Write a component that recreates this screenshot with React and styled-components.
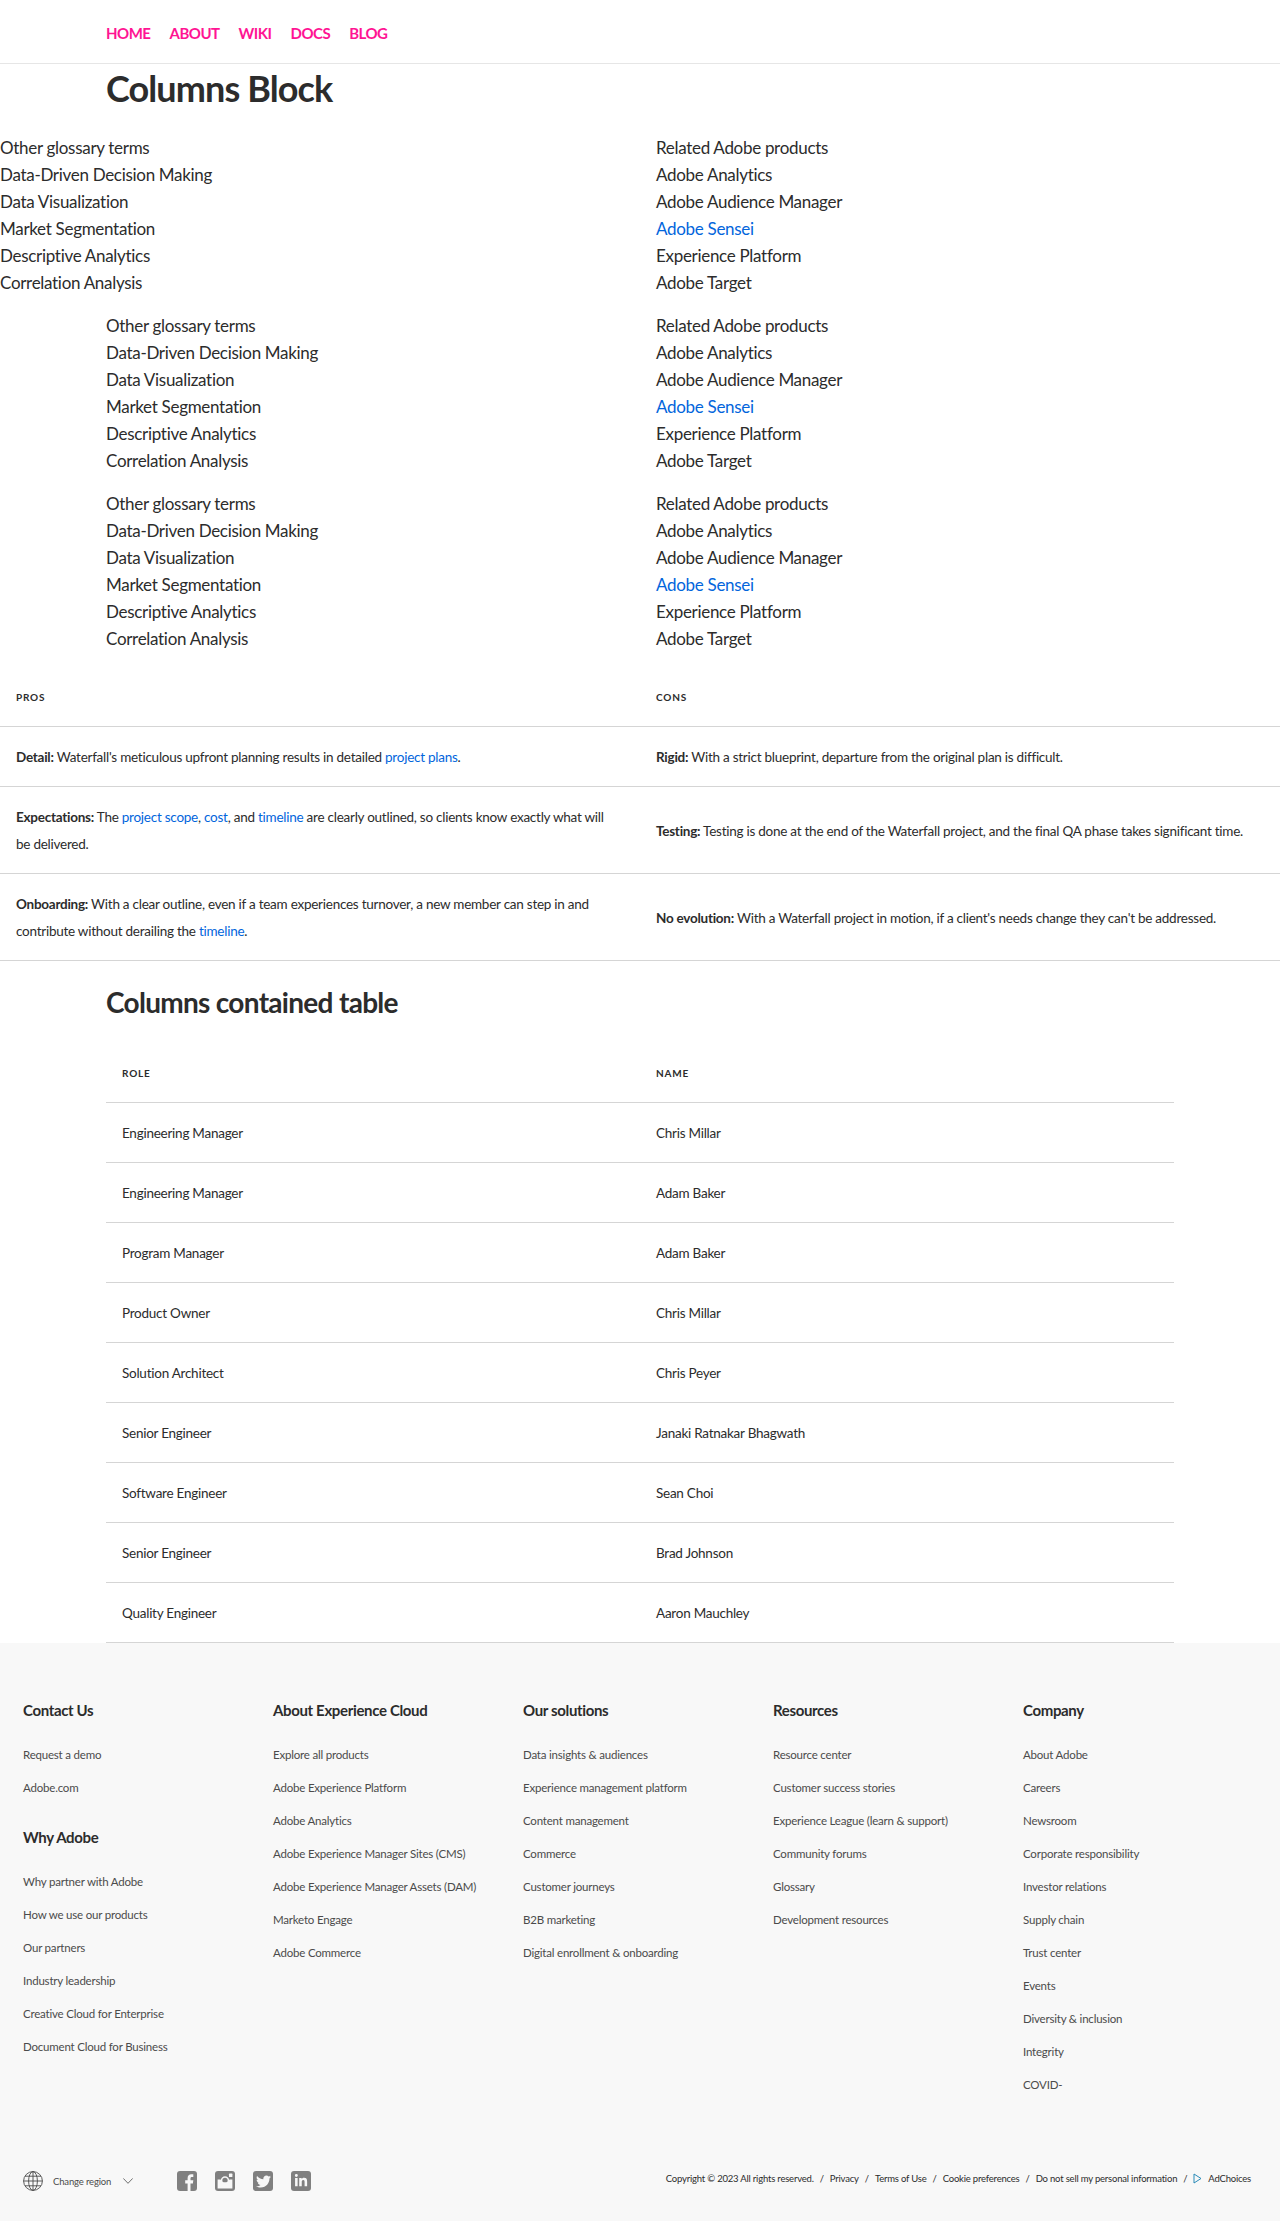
import React from 'react';
import styled, { createGlobalStyle } from 'styled-components';
import { FaTwitter, FaLinkedinIn } from 'react-icons/fa';

const GlobalStyle = createGlobalStyle`
  * { box-sizing: border-box; }
  body {
    margin: 0;
    background: #fff;
    color: #2c2c2c;
    font-family: "Lato", "Noto Sans", sans-serif;
  }
  a { color: inherit; text-decoration: none; }
`;

const Header = styled.header`
  height: 64px;
  border-bottom: 1px solid #e6e6e6;
  padding-left: 106px;
  display: flex;
  align-items: center;
`;

const Nav = styled.nav`
  display: flex;
  gap: 19px;
  margin-top: 2px;
  a {
    color: #ff1493;
    font-size: 15px;
    font-weight: 700;
    line-height: 20px;
    letter-spacing: -0.5px;
  }
`;

const Heading = styled.h1`
  margin: 0 0 0 106px;
  padding-top: 2px;
  font-size: 36px;
  line-height: 45px;
  font-weight: 700;
  height: 70px;
  letter-spacing: -0.9px;
`;

const Columns = styled.div`
  display: grid;
  grid-template-columns: ${(p) => (p.$bleed ? '656px' : '550px')} 1fr;
  padding-left: ${(p) => (p.$bleed ? '0' : '106px')};
  margin-bottom: 16px;
  font-size: 17px;
  line-height: 27px;
  letter-spacing: -0.3px;
  p { margin: 0; }
  a { color: #0265dc; }
`;

const Table = styled.table`
  border-collapse: collapse;
  table-layout: fixed;
  width: ${(p) => (p.$contained ? '1068px' : '100%')};
  margin-left: ${(p) => (p.$contained ? '106px' : '0')};
  margin-top: ${(p) => (p.$contained ? '0' : '-1px')};
  font-size: 13.5px;
  line-height: 27px;
  letter-spacing: -0.25px;
  th, td {
    padding: 17px 24px 15px 16px;
    text-align: left;
    border-bottom: 1px solid #d5d5d5;
  }
  th {
    font-size: 10px;
    font-weight: 700;
    letter-spacing: 0.8px;
    text-transform: uppercase;
  }
  a { color: #0265dc; }
  strong { font-weight: 700; }
`;

const SubHeading = styled.h2`
  margin: 24px 0 23px 106px;
  font-size: 28px;
  line-height: 35px;
  font-weight: 700;
  letter-spacing: -0.7px;
`;

const Footer = styled.footer`
  background: #f8f8f8;
  height: 578px;
  padding: 55px 29px 0 23px;
`;

const FooterGrid = styled.div`
  display: grid;
  grid-template-columns: repeat(5, 250px);
  height: 421px;
`;

const FooterGroup = styled.div`
  margin-bottom: 21.5px;
`;

const FooterTitle = styled.h3`
  margin: 0 0 15.5px;
  font-size: 15px;
  line-height: 24px;
  font-weight: 700;
  letter-spacing: -0.35px;
  color: #2c2c2c;
`;

const FooterList = styled.ul`
  list-style: none;
  margin: 0;
  padding: 0;
  li {
    font-size: 11.5px;
    line-height: 33px;
    letter-spacing: -0.2px;
    color: #4b4b4b;
  }
`;

const BottomBar = styled.div`
  display: flex;
  justify-content: space-between;
  height: 20px;
  margin-top: 52px;
`;

const Region = styled.div`
  display: flex;
  align-items: center;
  font-size: 9.5px;
  letter-spacing: -0.15px;
  color: #4b4b4b;
`;

const RegionLabel = styled.span`
  width: 58px;
  margin: 0 12px 0 10px;
  white-space: nowrap;
`;

const Socials = styled.div`
  display: flex;
  gap: 18px;
  margin-left: 44px;
`;

const SocialTile = styled.span`
  width: 20px;
  height: 20px;
  border-radius: 3px;
  background: #808080;
  color: #f8f8f8;
  display: flex;
  align-items: center;
  justify-content: center;
  overflow: hidden;
  svg { display: block; }
`;

const Legal = styled.div`
  display: flex;
  align-items: center;
  gap: 6px;
  height: 14px;
  font-size: 9.5px;
  letter-spacing: -0.2px;
  color: #2c2c2c;
  white-space: nowrap;
`;

const Globe = () => (
  <svg width="20" height="20" viewBox="0 0 20 20" fill="none" stroke="#4b4b4b" strokeWidth="0.9">
    <circle cx="10" cy="10" r="9.4" />
    <ellipse cx="10" cy="10" rx="4.4" ry="9.4" />
    <path d="M10 .6v18.8M.6 10h18.8M2 5.2h16M2 14.8h16" />
  </svg>
);

const Chevron = () => (
  <svg width="10" height="6" viewBox="0 0 10 6" fill="none" stroke="#4b4b4b" strokeWidth="0.8">
    <path d="M.3.4 5 5.3 9.7.4" />
  </svg>
);

const FacebookGlyph = () => (
  <svg width="20" height="20" viewBox="0 0 20 20" fill="currentColor">
    <path d="M10.6 20v-7.6H8.2V9.3h2.4V7.2c0-2.6 1.5-4 3.8-4 .8 0 1.5.1 1.9.1v2.8h-1.3c-1.2 0-1.5.6-1.5 1.4v1.8h2.8l-.4 3.1h-2.4V20z" />
  </svg>
);

const InstagramGlyph = () => (
  <svg width="20" height="20" viewBox="0 0 20 20">
    <path d="M2.6 8.4h3a4.8 4.8 0 0 0 8.8 0h3v9.2H2.6z" fill="currentColor" />
    <circle cx="10" cy="9.4" r="3.4" fill="none" stroke="currentColor" strokeWidth="1.5" />
    <rect x="14" y="2.6" width="3.4" height="3.4" rx=".6" fill="currentColor" />
  </svg>
);

const AdIcon = () => (
  <svg width="9" height="11" viewBox="0 0 9 11" fill="none" stroke="#2a8bb8" strokeWidth="1">
    <path d="M1 1v9l7-4.5z" />
  </svg>
);

const terms = ['Other glossary terms', 'Data-Driven Decision Making', 'Data Visualization', 'Market Segmentation', 'Descriptive Analytics', 'Correlation Analysis'];
const products = ['Related Adobe products', 'Adobe Analytics', 'Adobe Audience Manager', 'Adobe Sensei', 'Experience Platform', 'Adobe Target'];

const people = [
  ['Engineering Manager', 'Chris Millar'],
  ['Engineering Manager', 'Adam Baker'],
  ['Program Manager', 'Adam Baker'],
  ['Product Owner', 'Chris Millar'],
  ['Solution Architect', 'Chris Peyer'],
  ['Senior Engineer', 'Janaki Ratnakar Bhagwath'],
  ['Software Engineer', 'Sean Choi'],
  ['Senior Engineer', 'Brad Johnson'],
  ['Quality Engineer', 'Aaron Mauchley'],
];

const footerColumns = [
  [
    { title: 'Contact Us', links: ['Request a demo', 'Adobe.com'] },
    { title: 'Why Adobe', links: ['Why partner with Adobe', 'How we use our products', 'Our partners', 'Industry leadership', 'Creative Cloud for Enterprise', 'Document Cloud for Business'] },
  ],
  [{ title: 'About Experience Cloud', links: ['Explore all products', 'Adobe Experience Platform', 'Adobe Analytics', 'Adobe Experience Manager Sites (CMS)', 'Adobe Experience Manager Assets (DAM)', 'Marketo Engage', 'Adobe Commerce'] }],
  [{ title: 'Our solutions', links: ['Data insights & audiences', 'Experience management platform', 'Content management', 'Commerce', 'Customer journeys', 'B2B marketing', 'Digital enrollment & onboarding'] }],
  [{ title: 'Resources', links: ['Resource center', 'Customer success stories', 'Experience League (learn & support)', 'Community forums', 'Glossary', 'Development resources'] }],
  [{ title: 'Company', links: ['About Adobe', 'Careers', 'Newsroom', 'Corporate responsibility', 'Investor relations', 'Supply chain', 'Trust center', 'Events', 'Diversity & inclusion', 'Integrity', 'COVID-'] }],
];

const GlossaryColumns = ({ bleed }) => (
  <Columns $bleed={bleed}>
    <div>
      {terms.map((t) => <p key={t}>{t}</p>)}
    </div>
    <div>
      {products.map((t) => (
        <p key={t}>{t === 'Adobe Sensei' ? <a href="#">{t}</a> : t}</p>
      ))}
    </div>
  </Columns>
);

const App = () => (
  <>
    <GlobalStyle />
    <Header>
      <Nav>
        <a href="#">HOME</a>
        <a href="#">ABOUT</a>
        <a href="#">WIKI</a>
        <a href="#">DOCS</a>
        <a href="#">BLOG</a>
      </Nav>
    </Header>
    <main>
      <Heading>Columns Block</Heading>
      <GlossaryColumns bleed />
      <GlossaryColumns />
      <GlossaryColumns />
      <Table>
        <thead>
          <tr><th>Pros</th><th>Cons</th></tr>
        </thead>
        <tbody>
          <tr>
            <td><strong>Detail:</strong> Waterfall's meticulous upfront planning results in detailed <a href="#">project plans</a>.</td>
            <td><strong>Rigid:</strong> With a strict blueprint, departure from the original plan is difficult.</td>
          </tr>
          <tr>
            <td><strong>Expectations:</strong> The <a href="#">project scope</a>, <a href="#">cost</a>, and <a href="#">timeline</a> are clearly outlined, so clients know exactly what will be delivered.</td>
            <td><strong>Testing:</strong> Testing is done at the end of the Waterfall project, and the final QA phase takes significant time.</td>
          </tr>
          <tr>
            <td><strong>Onboarding:</strong> With a clear outline, even if a team experiences turnover, a new member can step in and contribute without derailing the <a href="#">timeline</a>.</td>
            <td><strong>No evolution:</strong> With a Waterfall project in motion, if a client's needs change they can't be addressed.</td>
          </tr>
        </tbody>
      </Table>
      <SubHeading>Columns contained table</SubHeading>
      <Table $contained>
        <thead>
          <tr><th>Role</th><th>Name</th></tr>
        </thead>
        <tbody>
          {people.map(([role, name], i) => (
            <tr key={i}><td>{role}</td><td>{name}</td></tr>
          ))}
        </tbody>
      </Table>
    </main>
    <Footer>
      <FooterGrid>
        {footerColumns.map((groups, i) => (
          <div key={i}>
            {groups.map((g) => (
              <FooterGroup key={g.title}>
                <FooterTitle>{g.title}</FooterTitle>
                <FooterList>
                  {g.links.map((l) => <li key={l}>{l}</li>)}
                </FooterList>
              </FooterGroup>
            ))}
          </div>
        ))}
      </FooterGrid>
      <BottomBar>
        <Region>
          <Globe />
          <RegionLabel>Change region</RegionLabel>
          <Chevron />
          <Socials>
            <SocialTile><FacebookGlyph /></SocialTile>
            <SocialTile><InstagramGlyph /></SocialTile>
            <SocialTile><FaTwitter size={15} /></SocialTile>
            <SocialTile><FaLinkedinIn size={14} /></SocialTile>
          </Socials>
        </Region>
        <Legal>
          <span>Copyright © 2023 All rights reserved.</span><span>/</span>
          <span>Privacy</span><span>/</span>
          <span>Terms of Use</span><span>/</span>
          <span>Cookie preferences</span><span>/</span>
          <span>Do not sell my personal information</span><span>/</span>
          <AdIcon /><span>AdChoices</span>
        </Legal>
      </BottomBar>
    </Footer>
  </>
);

export default App;
